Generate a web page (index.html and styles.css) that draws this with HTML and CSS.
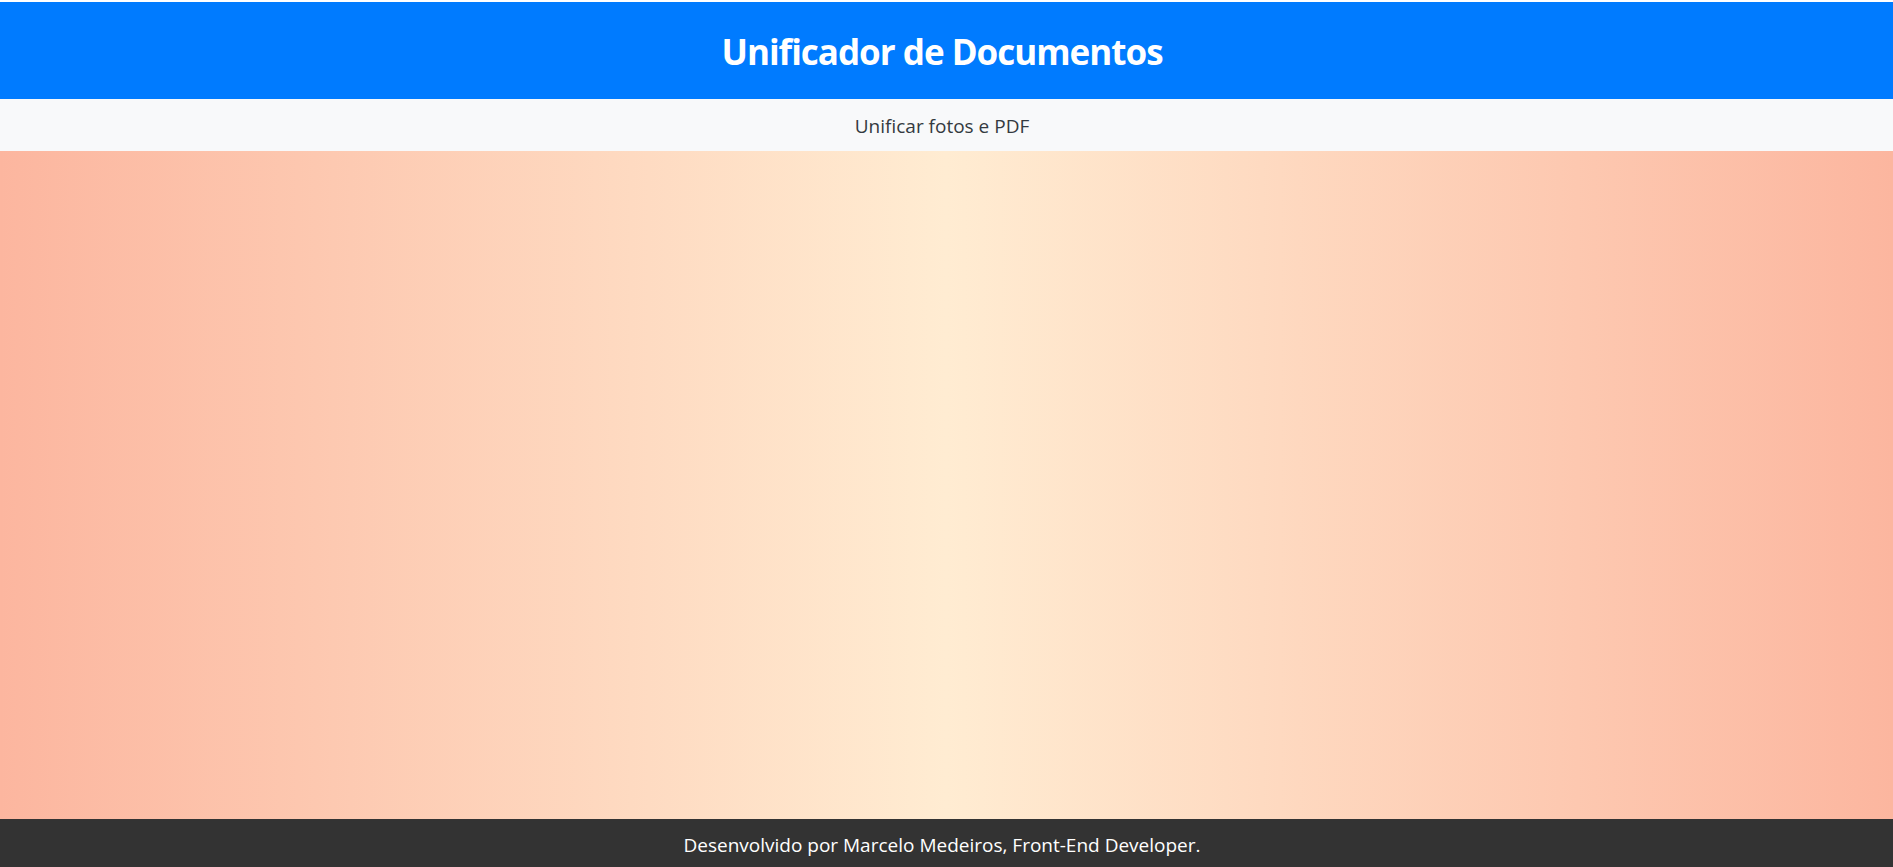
FILE: index.html
```html
<!DOCTYPE html>
<html lang="pt-BR">
<head>
<meta charset="utf-8">
<title>Unificador de Documentos</title>
<link rel="stylesheet" href="styles.css">
</head>
<body>
<div class="page">
  <header class="site-header">
    <h1 class="site-title">Unificador de Documentos</h1>
  </header>
  <nav class="site-nav">
    <span class="nav-link">Unificar fotos e PDF</span>
  </nav>
  <main class="site-main"></main>
  <footer class="site-footer">
    <p class="footer-text">Desenvolvido por Marcelo Medeiros, Front-End Developer.</p>
  </footer>
</div>
</body>
</html>
```
FILE: styles.css
```css
html, body {
  margin: 0;
  padding: 0;
  height: 100%;
  overflow: hidden;
}
body {
  background: #ffffff;
  font-family: "Open Sans", "Noto Sans", "Liberation Sans", sans-serif;
}
.page {
  display: flex;
  flex-direction: column;
  height: 867px;
  padding-top: 2px;
  box-sizing: border-box;
}
.site-header {
  background: #007bff;
  height: 97px;
  box-sizing: border-box;
  padding: 32px 9px 0 0;
  display: flex;
  justify-content: center;
  flex: none;
}
.site-title {
  margin: 0;
  color: #ffffff;
  font-weight: 700;
  font-size: 35px;
  letter-spacing: -1px;
  line-height: 1;
}
.site-nav {
  background: #f8f9fa;
  height: 52px;
  box-sizing: border-box;
  padding: 18px 9px 0 0;
  display: flex;
  justify-content: center;
  flex: none;
}
.nav-link {
  color: #343a40;
  font-size: 19px;
  line-height: 1;
}
.site-main {
  flex: 1;
  background: linear-gradient(to right, #fcb69f 0%, #ffecd2 50%, #fcb69f 100%);
}
.site-footer {
  background: #333333;
  height: 48px;
  box-sizing: border-box;
  flex: none;
  display: flex;
  justify-content: center;
  padding: 17px 9px 0 0;
}
.footer-text {
  margin: 0;
  color: #ffffff;
  font-size: 19px;
  line-height: 1;
}
```
